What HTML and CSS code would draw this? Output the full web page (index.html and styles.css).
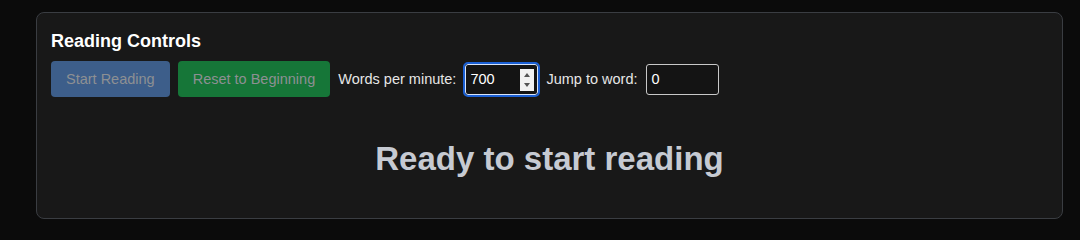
FILE: index.html
```html
<!DOCTYPE html>
<html lang="en">
<head>
<meta charset="utf-8">
<title>Reading Controls</title>
<link rel="stylesheet" href="styles.css">
</head>
<body>
<section class="panel">
  <h3 class="panel-title">Reading Controls</h3>
  <div class="controls">
    <button class="btn btn-blue" disabled>Start Reading</button>
    <button class="btn btn-green" disabled>Reset to Beginning</button>
    <label class="field-label" for="wpm">Words per minute:</label>
    <span class="spin-wrap">
      <input id="wpm" class="field field-focus" type="number" value="700">
      <span class="spinner"><span class="arrow-up"></span><span class="arrow-down"></span></span>
    </span>
    <label class="field-label" for="jump">Jump to word:</label>
    <input id="jump" class="field" type="number" value="0">
  </div>
  <div class="status">Ready to start reading</div>
</section>
</body>
</html>
```
FILE: styles.css
```css
html, body {
  background: #0b0b0b;
}
body {
  margin: 12px 17px 0 36px;
  font-family: "Liberation Sans", Arial, sans-serif;
}
.panel {
  background: #181818;
  border: 1px solid #3a3d42;
  border-radius: 8px;
  padding: 18px 14px 40px;
}
.panel-title {
  margin: 0 0 9px;
  font-size: 18px;
  line-height: 21px;
  font-weight: bold;
  color: #ffffff;
}
.controls {
  display: flex;
  align-items: center;
  gap: 8px;
  height: 36px;
}
.btn {
  height: 36px;
  padding: 0 15px;
  border: none;
  border-radius: 4px;
  font-family: "Liberation Sans", Arial, sans-serif;
  font-size: 14.5px;
  color: #8d9093;
}
.btn-blue {
  background: #3d5e8a;
}
.btn-green {
  background: #167638;
}
.field-label {
  font-size: 14.5px;
  color: #e6e6e6;
  margin-right: 1px;
}
.spin-wrap {
  position: relative;
  display: flex;
}
.field {
  box-sizing: border-box;
  width: 73px;
  height: 31px;
  padding: 0 4px;
  border: 1px solid #c8c8c8;
  border-radius: 3px;
  background: #141414;
  color: #ffffff;
  font-family: "Liberation Sans", Arial, sans-serif;
  font-size: 14.5px;
  -moz-appearance: textfield;
}
.field::-webkit-inner-spin-button,
.field::-webkit-outer-spin-button {
  -webkit-appearance: none;
  margin: 0;
}
.field-focus {
  border-color: #d8e4f8;
  outline: 2px solid #1a5fd4;
  outline-offset: 0;
  border-radius: 3px;
}
.spinner {
  position: absolute;
  right: 4px;
  top: 5px;
  width: 14px;
  height: 22px;
  background: #f2f2f2;
  display: flex;
  flex-direction: column;
  align-items: center;
  justify-content: space-between;
  padding: 4px 0;
  box-sizing: border-box;
}
.arrow-up {
  width: 0;
  height: 0;
  border-left: 3.5px solid transparent;
  border-right: 3.5px solid transparent;
  border-bottom: 4px solid #555;
}
.arrow-down {
  width: 0;
  height: 0;
  border-left: 3.5px solid transparent;
  border-right: 3.5px solid transparent;
  border-top: 4px solid #555;
}
.status {
  margin-top: 43px;
  text-align: center;
  font-size: 33px;
  line-height: 38px;
  font-weight: bold;
  color: #c6cad2;
}
```
